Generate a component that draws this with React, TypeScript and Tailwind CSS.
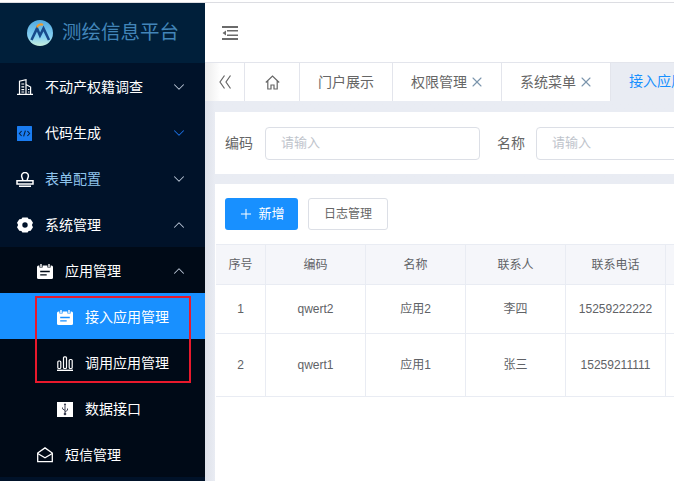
import { ChevronDown, ChevronUp, Plus, X } from "lucide-react";
import type { ReactNode } from "react";

const font = { fontFamily: '"Liberation Sans", "Noto Sans CJK SC", sans-serif' };

function LogoMark() {
  return (
    <svg width="26" height="26" viewBox="0 0 26 26">
      <defs>
        <linearGradient id="lg" x1="0" y1="0" x2="0" y2="1">
          <stop offset="0" stopColor="#4fa9e0" />
          <stop offset="0.65" stopColor="#86d0f2" />
          <stop offset="1" stopColor="#c8f0dc" />
        </linearGradient>
      </defs>
      <circle cx="13" cy="13" r="13" fill="url(#lg)" />
      <path d="M4.5 20 10 8.5 13 15.5 16.5 8.5 22 20" fill="none" stroke="#174a8c" strokeWidth="2.6" />
      <path d="M10 7.5a4 4 0 0 1 6-2.5" fill="none" stroke="#ef9b2d" strokeWidth="2" />
    </svg>
  );
}

function BuildingIcon() {
  return (
    <svg width="16" height="16" viewBox="0 0 16 16" fill="none" stroke="#fff" strokeWidth="1.2">
      <path d="M0 15.4h16M2.5 15V2.2L9 .7V15M9 5.5l4.6 2.6V15" />
      <path d="M4.4 5h2.8M4.4 7.8h2.8M4.4 10.6h2.8M4.4 13h2.8M11 10.5h1.4M11 13h1.4" />
    </svg>
  );
}

function CodeIcon() {
  return (
    <svg width="15" height="15" viewBox="0 0 15 15">
      <rect width="15" height="15" rx="0.5" fill="#1a7cf0" />
      <path d="M4.6 5 2.4 7.5 4.6 10M10.4 5l2.2 2.5L10.4 10M8.4 4.6 6.6 10.4" fill="none" stroke="#06203f" strokeWidth="1.1" />
    </svg>
  );
}

function StampIcon() {
  return (
    <svg className="-ml-px" width="18" height="15" viewBox="0 0 18 15" fill="none" stroke="#fff" strokeWidth="1.5">
      <path d="M6.8 8.5C6.8 6.5 5.6 5.6 5.6 3.9a3.4 3.4 0 0 1 6.8 0c0 1.7-1.2 2.6-1.2 4.6" />
      <path d="M1 8.8h16v3.2H1zM3 14.2h12" />
    </svg>
  );
}

function GearIcon() {
  return (
    <svg width="16" height="16" viewBox="0 0 16 16">
      <path
        fillRule="evenodd"
        fill="#fff"
        d="M5.4 0.4h5.2l1 1.7 2.1.1 2.3 3.6-1.1 2.2 1.1 2.2-2.3 3.6-2.1.1-1 1.7H5.4l-1-1.7-2.1-.1L0 10.2l1.1-2.2L0 5.8l2.3-3.6 2.1-.1zM8 5.3a2.7 2.7 0 1 0 0 5.4 2.7 2.7 0 0 0 0-5.4z"
      />
    </svg>
  );
}

function CalendarIcon({ stroke }: { stroke: string }) {
  return (
    <svg width="16" height="15" viewBox="0 0 16 15">
      <rect y="1.5" width="16" height="13.5" rx="1.5" fill="#fff" />
      <path d="M4 0v3.4M12 0v3.4" stroke={stroke} strokeWidth="3.2" />
      <path d="M4 0v3M12 0v3" stroke="#fff" strokeWidth="1.4" />
      <path d="M3.2 7.5h9.6M3.2 10.8h6.5" stroke={stroke} strokeWidth="1.3" />
    </svg>
  );
}

function ChartIcon() {
  return (
    <svg width="16" height="15" viewBox="0 0 16 15" fill="none" stroke="#fff" strokeWidth="1.2">
      <rect x="0.8" y="5" width="3" height="7.5" rx="1" />
      <rect x="6.5" y="0.8" width="3" height="11.7" rx="1" />
      <rect x="12.2" y="3.5" width="3" height="9" rx="1" />
      <path d="M0 14.3h16" strokeWidth="1.4" />
    </svg>
  );
}

function UsbIcon() {
  return (
    <svg width="16" height="15" viewBox="0 0 16 15">
      <rect width="16" height="15" fill="#fff" />
      <path d="M8 2v10M8 8.5 5.5 6.8V5.5M8 10l2.5-1.8V6.5" fill="none" stroke="#3a3f52" strokeWidth="1" />
      <circle cx="8" cy="12" r="1.3" fill="#3a3f52" />
      <path d="M8 1 6.8 3h2.4z" fill="#3a3f52" />
    </svg>
  );
}

function MailIcon() {
  return (
    <svg width="16" height="16" viewBox="0 0 16 16" fill="none" stroke="#fff" strokeWidth="1.3">
      <path d="M.7 6 8 .9 15.3 6v8.7H.7z" />
      <path d="M.7 6.5 8 10.8l7.3-4.3" />
    </svg>
  );
}

function CollapseIcon() {
  return (
    <svg width="16" height="14" viewBox="0 0 16 14" fill="#6b6b6b">
      <path d="M0 0h16v2H0zM0 12h16v2H0zM5 4h11v1.6H5zM5 8.4h11V10H5zM.5 7 4 4.5v5z" />
    </svg>
  );
}

function HomeIcon() {
  return (
    <svg width="15" height="15" viewBox="0 0 15 15" fill="none" stroke="#666" strokeWidth="1.2">
      <path d="M.8 7.5 7.5 1l6.700 6.500M2.800 6v8h3.200v-4h3v4h3.200V6" />
    </svg>
  );
}

function DoubleLeftIcon() {
  return (
    <svg width="12" height="14" viewBox="0 0 12 14" fill="none" stroke="#666" strokeWidth="1.2">
      <path d="M5.5.5 1 7l4.500 6.500M11.500.5 7 7l4.500 6.500" />
    </svg>
  );
}

type RowProps = {
  icon: ReactNode;
  label: string;
  arrow?: "up" | "down";
  arrowClass?: string;
  labelClass?: string;
  pad?: string;
  rowClass?: string;
};

function MenuRow({ icon, label, arrow, arrowClass = "text-[#b9c6d6]", labelClass = "text-white", pad = "pl-[17px]", rowClass = "" }: RowProps) {
  return (
    <div className={`flex h-[46px] items-center pt-[2px] pr-[17px] ${pad} ${rowClass}`}>
      <span className="flex w-[28px] shrink-0 items-center">{icon}</span>
      <span className={`flex-1 text-sm ${labelClass}`}>{label}</span>
      {arrow === "down" && <ChevronDown size={18} strokeWidth={1.4} className={arrowClass} />}
      {arrow === "up" && <ChevronUp size={18} strokeWidth={1.4} className={arrowClass} />}
    </div>
  );
}

function Sidebar() {
  return (
    <aside className="flex h-full w-[205px] shrink-0 flex-col overflow-hidden bg-[#001229]">
      <div className="flex h-[60px] shrink-0 items-center bg-[#001f3a] pl-[27px]">
        <LogoMark />
        <span className="ml-[9px] text-[19.5px] whitespace-nowrap text-[#4285b8]">测绘信息平台</span>
      </div>
      <MenuRow icon={<BuildingIcon />} label="不动产权籍调查" arrow="down" />
      <MenuRow icon={<CodeIcon />} label="代码生成" arrow="down" arrowClass="text-[#1a6fe0]" />
      <MenuRow icon={<StampIcon />} label="表单配置" arrow="down" labelClass="text-[#8fc4ec]" />
      <MenuRow icon={<GearIcon />} label="系统管理" arrow="up" />
      <div className="bg-[#000a17]">
        <MenuRow icon={<CalendarIcon stroke="#000a17" />} label="应用管理" arrow="up" pad="pl-[37px]" />
        <MenuRow icon={<CalendarIcon stroke="#1890ff" />} label="接入应用管理" pad="pl-[57px]" rowClass="bg-[#1890ff]" />
        <MenuRow icon={<ChartIcon />} label="调用应用管理" pad="pl-[57px]" />
        <MenuRow icon={<UsbIcon />} label="数据接口" pad="pl-[57px]" />
        <MenuRow icon={<MailIcon />} label="短信管理" pad="pl-[37px]" />
      </div>
    </aside>
  );
}

function Tab({ label, width, closable }: { label: string; width: string; closable?: boolean }) {
  return (
    <div className={`flex h-full shrink-0 items-center justify-center gap-[6px] border-r border-[#e3e5ec] bg-white text-sm text-[#666] ${width} ${closable ? "pr-[2px]" : ""}`}>
      <span>{label}</span>
      {closable && <X size={16} strokeWidth={1.6} className="-mx-[4px] text-[#7b95ad]" />}
    </div>
  );
}

function TabBar() {
  return (
    <div className="flex h-[39px] shrink-0 border-t border-[#e3e5ec] bg-[#e9ecf3]">
      <div className="flex h-full w-[40px] shrink-0 items-center justify-center border-r border-[#e3e5ec] bg-gradient-to-r from-[#ececec] to-white to-40%">
        <DoubleLeftIcon />
      </div>
      <div className="flex h-full w-[55px] shrink-0 items-center justify-center border-r border-[#e3e5ec] bg-white">
        <HomeIcon />
      </div>
      <Tab label="门户展示" width="w-[93px]" />
      <Tab label="权限管理" width="w-[109px]" closable />
      <Tab label="系统菜单" width="w-[109px]" closable />
      <div className="pl-[18px] text-sm leading-[37px] whitespace-nowrap text-[#1890ff]">接入应用</div>
    </div>
  );
}

function FilterField({ label, gap }: { label: string; gap: string }) {
  return (
    <div className={`flex shrink-0 items-center ${gap}`}>
      <span className="text-sm text-[#666]">{label}</span>
      <div className="flex h-[33px] w-[215px] items-center rounded border border-[#dcdfe6] pl-[15px] text-[13px] text-[#c0c4cc]">
        请输入
      </div>
    </div>
  );
}

const columns = [
  { label: "序号", w: "w-[50px]" },
  { label: "编码", w: "w-[100px]" },
  { label: "名称", w: "w-[100px]" },
  { label: "联系人", w: "w-[100px]" },
  { label: "联系电话", w: "w-[100px]" },
  { label: "", w: "w-[100px]" },
];

function TableRow({ cells, rowClass, h }: { cells: string[]; rowClass?: string; h: string }) {
  return (
    <div className={`flex shrink-0 border-b border-[#e9ecf3] ${h} ${rowClass ?? ""}`}>
      {columns.map((c, i) => (
        <div key={i} className={`flex shrink-0 items-center justify-center border-r border-[#e9ecf3] text-xs text-[#606266] ${c.w}`}>
          {cells[i]}
        </div>
      ))}
    </div>
  );
}

export default function App() {
  return (
    <div className="relative h-[481px] w-[674px] overflow-hidden bg-white" style={font}>
      <div className="mt-[2px] h-px bg-[#dcdde2]" />
      <div className="flex h-[478px]">
        <Sidebar />
        <main className="flex min-w-0 flex-1 flex-col overflow-hidden">
          <div className="flex h-[59px] shrink-0 items-center bg-white pl-[17px]">
            <CollapseIcon />
          </div>
          <TabBar />
          <div className="flex flex-1 flex-col gap-[10px] bg-gradient-to-r from-[#dfe2ea] to-[#e9ecf3] to-[10px] pt-[11px] pl-[10px]">
            <div className="flex h-[62px] shrink-0 items-center gap-[17px] bg-white pl-[10px]">
              <FilterField label="编码" gap="gap-[12px]" />
              <FilterField label="名称" gap="gap-[11px]" />
            </div>
            <div className="flex-1 bg-white pt-[14px]">
              <div className="flex gap-[10px] pl-[10px]">
                <div className="flex h-[32px] w-[73px] items-center justify-center gap-[4px] rounded-[3px] bg-[#1890ff] text-[13px] text-white">
                  <Plus size={16} strokeWidth={1.5} />
                  <span>新增</span>
                </div>
                <div className="flex h-[32px] w-[80px] items-center justify-center rounded-[3px] border border-[#dcdfe6] text-xs text-[#666]">
                  日志管理
                </div>
              </div>
              <div className="mt-[14px] ml-[1px] flex flex-col border-t border-[#e9ecf3]">
                <TableRow h="h-[40px]" rowClass="bg-[#f5f6fa]" cells={columns.map((c) => c.label)} />
                <TableRow h="h-[49px]" cells={["1", "qwert2", "应用2", "李四", "15259222222", ""]} />
                <TableRow h="h-[63px]" cells={["2", "qwert1", "应用1", "张三", "15259211111", ""]} />
              </div>
            </div>
          </div>
        </main>
      </div>
      <div className="absolute top-[296px] left-[35px] h-[87px] w-[156px] border-2 border-[#e8192c]" />
    </div>
  );
}
